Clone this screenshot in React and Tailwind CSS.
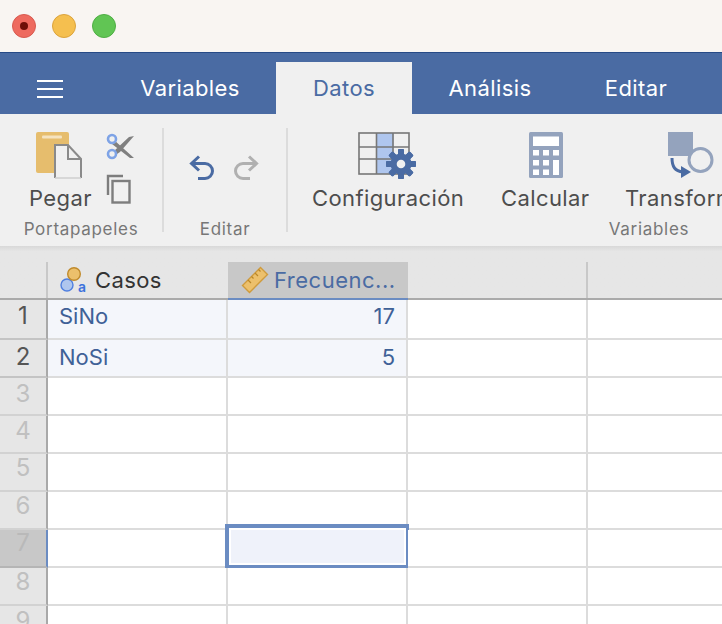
const FONT = { fontFamily: 'Inter, "Liberation Sans", sans-serif' };

function Hamburger() {
  return (
    <div className="flex flex-col gap-[6px] w-[26px] mt-[1px]">
      <div className="h-[2px] bg-white" />
      <div className="h-[2px] bg-white" />
      <div className="h-[2px] bg-white" />
    </div>
  );
}

function PasteIcon() {
  return (
    <svg width="50" height="48" viewBox="0 0 50 48">
      <rect x="1" y="0" width="33" height="41" rx="2" fill="#e6bd6d" />
      <rect x="7" y="3.5" width="20" height="3" rx="1" fill="#f5e3bf" />
      <path d="M20 46V13h13l13 14v19z" fill="#f0f0f0" />
      <path d="M20 46V13h13l13 14v19" fill="none" stroke="#8a8a8a" strokeWidth="2" />
      <path d="M33 13v14h13" fill="none" stroke="#8a8a8a" strokeWidth="2" />
      <path d="M20 46h26" stroke="#cfcfcf" strokeWidth="1.5" />
    </svg>
  );
}

function CutIcon() {
  return (
    <svg width="30" height="27" viewBox="0 0 30 27">
      <path d="M8 7l20 18h-4L6 11zM8 18L23 4l5-1L14 19l-3 2z" fill="#808080" />
      <circle cx="6" cy="6" r="4" fill="#f0f0f0" stroke="#7ea3e6" strokeWidth="2.6" />
      <circle cx="6" cy="21" r="4" fill="#f0f0f0" stroke="#7ea3e6" strokeWidth="2.6" />
    </svg>
  );
}

function CopyIcon() {
  return (
    <svg width="26" height="30" viewBox="0 0 26 30">
      <path d="M2 21V2h15" fill="none" stroke="#7d7d7d" strokeWidth="2.4" />
      <rect x="6.5" y="7" width="17" height="21.5" fill="none" stroke="#7d7d7d" strokeWidth="2.4" />
    </svg>
  );
}

function ArrowIcon({ color, flip }) {
  return (
    <svg width="26" height="26" viewBox="0 0 26 26" className={flip ? "-scale-x-100" : ""}>
      <path d="M3 8.5h13a7.5 7.5 0 0 1 0 15H9" fill="none" stroke={color} strokeWidth="3" />
      <path d="M10 1.5L2.5 8.5l7.5 7" fill="none" stroke={color} strokeWidth="3" />
    </svg>
  );
}

function GridGearIcon() {
  const cx = 43;
  const cy = 32;
  const teeth = [0, 45, 90, 135, 180, 225, 270, 315];
  return (
    <svg width="60" height="48" viewBox="0 0 60 48">
      <rect x="18.5" y="1" width="17" height="41" fill="#afc6ee" />
      <rect x="1" y="1" width="50" height="41" fill="none" stroke="#777" strokeWidth="1.6" />
      <path d="M1 15h50M1 27h50M18.5 1v41M35 1v41" stroke="#777" strokeWidth="1.6" fill="none" />
      {teeth.map((a) => (
        <rect key={a} x={cx - 3} y={cy - 15} width="6" height="30" rx="1.2" fill="#4a6ba3" transform={`rotate(${a} ${cx} ${cy})`} />
      ))}
      <circle cx={cx} cy={cy} r="10.5" fill="#4a6ba3" />
      <circle cx={cx} cy={cy} r="4.3" fill="#f0f0f0" />
    </svg>
  );
}

function CalculatorIcon() {
  const keys = [
    [4, 18], [14, 18], [24, 18],
    [4, 28], [14, 28],
    [4, 37.5], [14, 37.5],
  ];
  return (
    <svg width="34" height="46" viewBox="0 0 34 46">
      <rect x="0" y="0" width="34" height="46" rx="1.5" fill="#94a3bd" />
      <rect x="4" y="4.5" width="26" height="9.5" fill="#fff" />
      {keys.map(([x, y]) => (
        <rect key={`${x}-${y}`} x={x} y={y} width="6" height="5.5" fill="#fff" />
      ))}
      <rect x="24" y="28" width="6" height="15" fill="#fff" />
    </svg>
  );
}

function TransformIcon() {
  return (
    <svg width="46" height="46" viewBox="0 0 46 46">
      <rect x="0" y="0" width="25" height="24" fill="#94a3bd" />
      <circle cx="32.5" cy="28" r="11.5" fill="#f0f0f0" stroke="#94a3bd" strokeWidth="3" />
      <path d="M4 26c0 9 3 13 11 14" fill="none" stroke="#4a6ba3" strokeWidth="3" />
      <path d="M13 34l10 6-10 6z" fill="#4a6ba3" />
    </svg>
  );
}

function NominalIcon() {
  return (
    <svg width="30" height="28" viewBox="0 0 30 28">
      <circle cx="7" cy="19" r="6" fill="#afc6ee" stroke="#4f7fe0" strokeWidth="1.4" />
      <circle cx="14" cy="8" r="6.3" fill="#ecc06c" stroke="#c08a2c" strokeWidth="1.4" />
      <text x="18" y="26" fontSize="14" fontWeight="600" fill="#3d73dd" style={FONT}>a</text>
    </svg>
  );
}

function RulerIcon() {
  return (
    <svg width="28" height="28" viewBox="0 0 28 28">
      <path d="M1.5 19.5L19.5 1.5l7 7-18 18z" fill="#ecc06c" stroke="#cf9b3d" strokeWidth="1.4" />
      <path d="M7 14l3 3M10.5 10.5l2 2M14 7l3 3M17.5 3.5l2 2" stroke="#b98729" strokeWidth="1.2" />
    </svg>
  );
}

function Tab({ w, active, children }) {
  return (
    <div
      className={`h-full flex items-center justify-center text-[22px] tracking-[0.4px] ${w} ${
        active ? "bg-[#f0f0f0] text-[#4a6ba3]" : "text-white"
      }`}
    >
      {children}
    </div>
  );
}

function RibbonSection({ className, label, children }) {
  return (
    <div className={`flex flex-col shrink-0 ${className}`}>
      <div className="h-[104px] flex">{children}</div>
      <div className="text-[17px] tracking-[0.7px] text-[#777] text-center leading-[22px]">{label}</div>
    </div>
  );
}

function Divider() {
  return <div className="w-[2px] h-[104px] mt-[14px] bg-[#dcdcdc] shrink-0" />;
}

function BigButton({ icon, label, className }) {
  return (
    <div className={`flex flex-col items-start pt-[18px] shrink-0 ${className}`}>
      <div className="h-[50px] w-full flex justify-center">{icon}</div>
      <div className="text-[22px] tracking-[0.4px] text-[#4d4d4d] leading-[28px] mt-[2px] whitespace-nowrap">{label}</div>
    </div>
  );
}

function RowHeader({ n, selected, nudge }) {
  const faded = n > 2;
  return (
    <div
      className={`w-[48px] shrink-0 h-full flex items-center justify-center text-[24px] border-r-2 border-b-2 ${nudge} ${
        selected
          ? "bg-[#c8c8c8] text-[#b9b9b9] border-r-[#6b8cc2] border-b-[#b5b5b5]"
          : faded
            ? "bg-[#e6e6e6] text-[#c0c0c0] border-r-[#a9a9a9] border-b-[#d2d2d2]"
            : "bg-[#e6e6e6] text-[#555] border-r-[#a9a9a9] border-b-[#c4c4c4]"
      }`}
    >
      {n}
    </div>
  );
}

function Cell({ filled, right, selected, nudge, children }) {
  return (
    <div
      className={`relative w-[180px] shrink-0 h-full px-[11px] flex items-center text-[22px] text-[#3f6197] border-r-2 border-b-2 border-[#dcdcdc] ${nudge} ${
        filled ? "bg-[#f4f6fb]" : "bg-white"
      } ${right ? "justify-end" : ""}`}
    >
      {children}
      {selected && (
        <div className="absolute left-[-3px] top-[-6px] right-[-3px] bottom-[-2px] border-t-4 border-l-4 border-r-[3px] border-b-[3px] border-[#6b8cc2]">
          <div className="h-full border-2 border-white bg-[#eff2fa]" />
        </div>
      )}
    </div>
  );
}

function Row({ n, a, b, filled, active, height = "h-[38px]", nudge }) {
  return (
    <div className={`flex shrink-0 ${height}`}>
      <RowHeader n={n} selected={active} nudge={nudge} />
      <Cell filled={filled} nudge={nudge}>{a}</Cell>
      <Cell filled={filled} nudge={nudge} right selected={active}>{b}</Cell>
      <Cell />
      <Cell />
    </div>
  );
}

export default function App() {
  return (
    <div className="w-[722px] h-[624px] overflow-hidden bg-white flex flex-col" style={FONT}>
      <div className="h-[52px] bg-[#f9f5f2] flex items-center gap-[16px] pl-[12px] shrink-0">
        <div className="w-[24px] h-[24px] rounded-full bg-[#ee6a5f] border border-[#d85a50] flex items-center justify-center">
          <div className="w-[8px] h-[8px] rounded-full bg-[#6e0f08]" />
        </div>
        <div className="w-[24px] h-[24px] rounded-full bg-[#f5bf4f] border border-[#dca33c]" />
        <div className="w-[24px] h-[24px] rounded-full bg-[#61c554] border border-[#4fae44]" />
      </div>

      <div className="h-[62px] bg-[#4a6ba3] border-t border-t-[#274a86] pt-[9px] flex shrink-0">
        <div className="w-[100px] h-full flex items-center justify-center">
          <Hamburger />
        </div>
        <Tab w="w-[176px] pl-[4px]">Variables</Tab>
        <Tab w="w-[136px]" active>Datos</Tab>
        <Tab w="w-[156px]">Análisis</Tab>
        <Tab w="w-[136px]">Editar</Tab>
      </div>

      <div className="h-[132px] bg-[#f0f0f0] flex shrink-0 overflow-hidden">
        <RibbonSection className="w-[162px]" label="Portapapeles">
          <div className="pl-[29px] flex">
            <BigButton className="w-[62px]" icon={<PasteIcon />} label="Pegar" />
            <div className="flex flex-col pt-[19px] pl-[15px] gap-[14px]">
              <CutIcon />
              <CopyIcon />
            </div>
          </div>
        </RibbonSection>
        <Divider />
        <RibbonSection className="w-[122px]" label="Editar">
          <div className="pl-[25px] pt-[41px] flex gap-[18px]">
            <ArrowIcon color="#4a6ba3" />
            <ArrowIcon color="#b0b0b0" flip />
          </div>
        </RibbonSection>
        <Divider />
        <RibbonSection className="w-[722px]" label="Variables">
          <div className="pl-[24px] flex">
            <BigButton className="w-[152px]" icon={<GridGearIcon />} label="Configuración" />
            <BigButton className="w-[89px] ml-[37px]" icon={<CalculatorIcon />} label="Calcular" />
            <BigButton className="w-[132px] ml-[35px]" icon={<TransformIcon />} label="Transformar" />
          </div>
        </RibbonSection>
      </div>

      <div className="h-[54px] pt-[16px] shrink-0 bg-gradient-to-b from-[#d8d8d8] from-0% to-[#e6e6e6] to-[10%]">
        <div className="flex h-[38px] border-b-2 border-[#aaaaaa]">
          <div className="w-[48px] border-r-2 border-[#c8c8c8] shrink-0" />
          <div className="w-[180px] flex items-center pl-[12px] gap-[5px] text-[22px] tracking-[0.4px] text-[#333] shrink-0">
            <NominalIcon />
            <span>Casos</span>
          </div>
          <div className="w-[180px] flex items-center pl-[13px] gap-[5px] text-[22px] tracking-[0.5px] text-[#4a6ba3] bg-[#c8c8c8] border-b-2 border-[#6b8cc2] -mb-[2px] shrink-0">
            <RulerIcon />
            <span>Frecuenc...</span>
          </div>
          <div className="w-[180px] border-r-2 border-[#c8c8c8] shrink-0" />
        </div>
      </div>

      <Row n={1} a="SiNo" b="17" filled height="h-[40px]" nudge="pb-[6px]" />
      <Row n={2} a="NoSi" b="5" filled nudge="pb-[2px]" />
      <Row n={3} nudge="pb-[4px]" />
      <Row n={4} nudge="pb-[6px]" />
      <Row n={5} nudge="pb-[8px]" />
      <Row n={6} nudge="pb-[8px]" />
      <Row n={7} active nudge="pb-[10px]" />
      <Row n={8} nudge="pb-[8px]" />
      <Row n={9} nudge="pb-[6px]" />
    </div>
  );
}
